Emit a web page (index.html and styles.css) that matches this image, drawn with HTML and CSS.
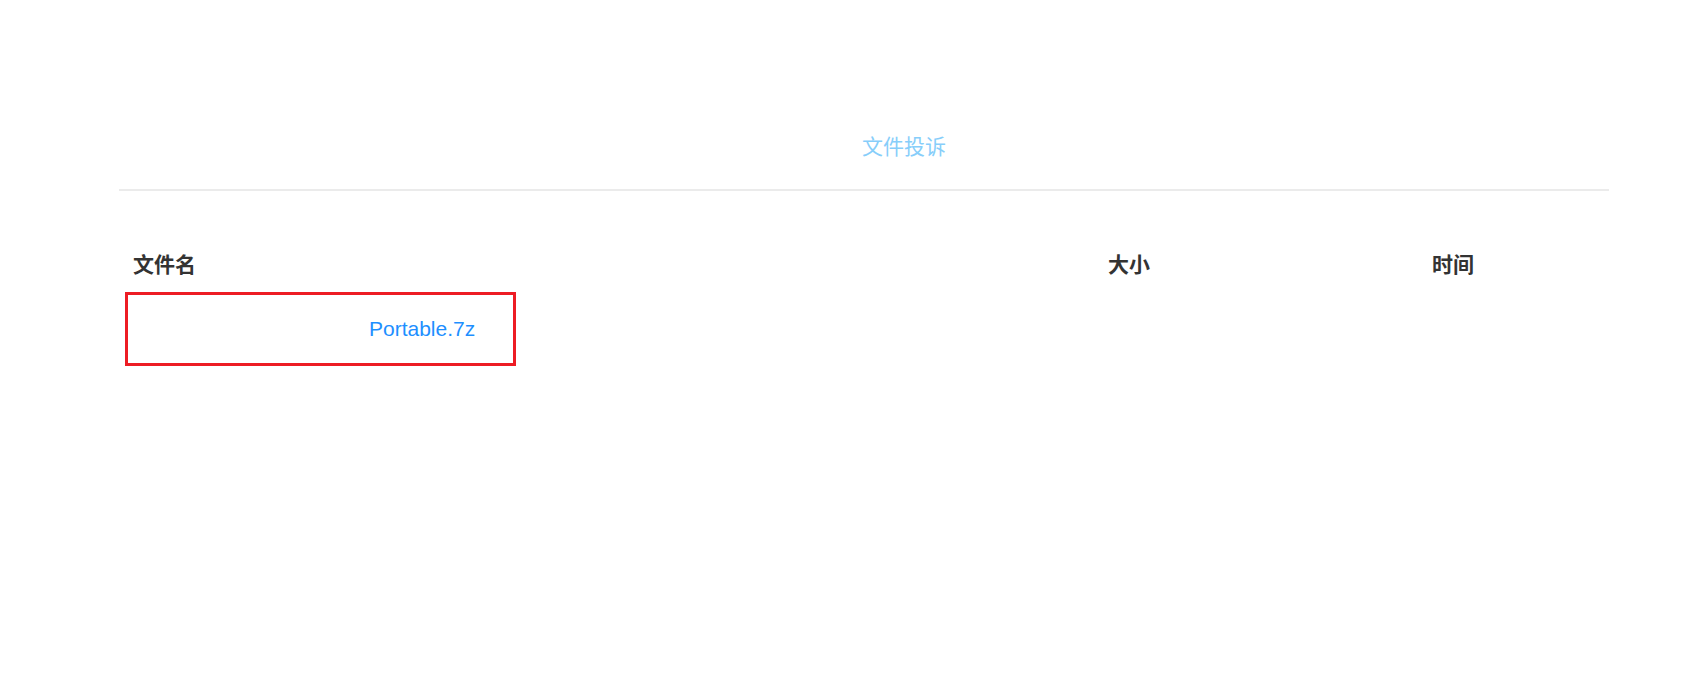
FILE: index.html
```html
<!DOCTYPE html>
<html lang="zh-CN">
<head>
<meta charset="utf-8">
<title>文件投诉</title>
<link rel="stylesheet" href="styles.css">
</head>
<body>
<div class="page">
  <div class="tabs">
    <span class="tab">文件投诉</span>
  </div>
  <div class="files">
    <div class="row head">
      <div class="cell">文件名</div>
      <div class="cell">大小</div>
      <div class="cell">时间</div>
    </div>
    <div class="row first">
      <div class="cell name">
        <div class="highlight"><a class="file-link">Portable.7z</a></div>
      </div>
      <div class="cell"></div>
      <div class="cell"></div>
    </div>
    <div class="row blank"><div class="cell"></div><div class="cell"></div><div class="cell"></div></div>
    <div class="row blank"><div class="cell"></div><div class="cell"></div><div class="cell"></div></div>
  </div>
</div>
</body>
</html>
```
FILE: styles.css
```css
html, body {
  margin: 0;
  padding: 0;
  background: #ffffff;
}

body {
  font-family: "Liberation Sans", "Noto Sans CJK SC", sans-serif;
  color: #333333;
}

.page {
  margin-left: 119px;
  width: 1490px;
  padding-top: 130px;
}

.tabs {
  padding-left: 743px;
  padding-bottom: 29px;
  border-bottom: 2px solid #ebebeb;
}

.tab {
  display: inline-block;
  font-family: "Noto Sans CJK SC", sans-serif;
  font-size: 21px;
  line-height: 30px;
  color: #87cefa;
}

.files {
  margin-top: 57px;
}

.row {
  display: grid;
  grid-template-columns: 975px 324px 1fr;
}

.head .cell {
  padding-left: 14px;
  font-family: "Noto Sans CJK SC", sans-serif;
  font-weight: bold;
  font-size: 21px;
  line-height: 30px;
  color: #333333;
}

.first {
  margin-top: 14px;
}

.highlight {
  margin-left: 6px;
  border: 3px solid #ed1c24;
  padding-left: 241px;
  padding-top: 21px;
  box-sizing: content-box;
  width: 144px;
  height: 47px;
}

.file-link {
  font-size: 21px;
  line-height: 25px;
  color: #1e8fff;
  text-decoration: none;
}

.blank {
  height: 70px;
}
```
